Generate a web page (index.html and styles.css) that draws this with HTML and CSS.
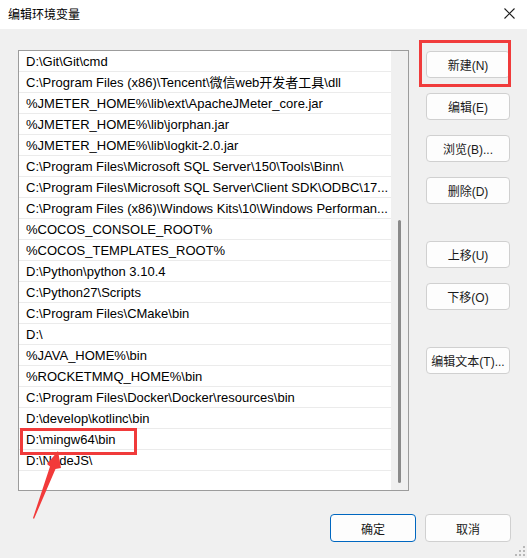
FILE: index.html
```html
<!DOCTYPE html>
<html lang="zh">
<head>
    <meta charset="UTF-8">
    <title>编辑环境变量</title>
    <link rel="stylesheet" href="styles.css">
</head>
<body>
    <div class="window">
        <div class="titlebar">
            <span class="title">编辑环境变量</span>
            <svg class="close" width="11" height="11" viewBox="0 0 11 11">
                <path d="M0.5 0.5L10.5 10.5M10.5 0.5L0.5 10.5" stroke="#1c1c1c" stroke-width="1.1"/>
            </svg>
        </div>

        <div class="content">
            <div class="main">
                <div class="listbox">
                    <ul class="paths">
                        <li>D:\Git\Git\cmd</li>
                        <li>C:\Program Files (x86)\Tencent\微信web开发者工具\dll</li>
                        <li>%JMETER_HOME%\lib\ext\ApacheJMeter_core.jar</li>
                        <li>%JMETER_HOME%\lib\jorphan.jar</li>
                        <li>%JMETER_HOME%\lib\logkit-2.0.jar</li>
                        <li>C:\Program Files\Microsoft SQL Server\150\Tools\Binn\</li>
                        <li>C:\Program Files\Microsoft SQL Server\Client SDK\ODBC\17...</li>
                        <li>C:\Program Files (x86)\Windows Kits\10\Windows Performan...</li>
                        <li>%COCOS_CONSOLE_ROOT%</li>
                        <li>%COCOS_TEMPLATES_ROOT%</li>
                        <li>D:\Python\python 3.10.4</li>
                        <li>C:\Python27\Scripts</li>
                        <li>C:\Program Files\CMake\bin</li>
                        <li>D:\</li>
                        <li>%JAVA_HOME%\bin</li>
                        <li>%ROCKETMMQ_HOME%\bin</li>
                        <li>C:\Program Files\Docker\Docker\resources\bin</li>
                        <li>D:\develop\kotlinc\bin</li>
                        <li>D:\mingw64\bin</li>
                        <li>D:\NodeJS\</li>
                    </ul>
                    <div class="scrollbar"><div class="thumb"></div></div>
                </div>

                <div class="actions">
                    <button class="btn">新建(N)</button>
                    <button class="btn">编辑(E)</button>
                    <button class="btn">浏览(B)...</button>
                    <button class="btn">删除(D)</button>
                    <button class="btn gap">上移(U)</button>
                    <button class="btn">下移(O)</button>
                    <button class="btn gap">编辑文本(T)...</button>
                </div>
            </div>

            <div class="footer">
                <button class="btn wide primary">确定</button>
                <button class="btn wide">取消</button>
            </div>
        </div>

        <!-- 标注 -->
        <div class="mark mark-new"></div>
        <div class="mark mark-row"></div>
        <svg class="arrow" width="40" height="80" viewBox="0 0 40 80">
            <polygon points="28,1 31,18 25.5,19 4,69 3,68 20,16.5 17,14" fill="#f23a3a"/>
        </svg>

        <svg class="grip" width="10" height="10" viewBox="0 0 10 10" fill="#b8b8b8">
            <rect x="8" y="0" width="2" height="2"/>
            <rect x="4" y="4" width="2" height="2"/>
            <rect x="8" y="4" width="2" height="2"/>
            <rect x="0" y="8" width="2" height="2"/>
            <rect x="4" y="8" width="2" height="2"/>
            <rect x="8" y="8" width="2" height="2"/>
        </svg>
    </div>
</body>
</html>
```

FILE: styles.css
```css
* {
    box-sizing: border-box;
}
body {
    margin: 0;
    font-family: "Liberation Sans", "Noto Sans CJK SC", sans-serif;
    font-size: 13px;
    color: #000;
}
.window {
    position: relative;
    width: 527px;
    height: 558px;
    display: flex;
    flex-direction: column;
    background: #f0f0f0;
    overflow: hidden;
}
.titlebar {
    height: 29px;
    background: #fff;
    display: flex;
    align-items: center;
    justify-content: space-between;
    padding: 0 12px 2px 8px;
}
.title {
    font-family: "Noto Sans CJK SC", sans-serif;
    font-size: 12px;
    color: #000;
}
.content {
    flex: 1;
    display: flex;
    flex-direction: column;
    padding: 21px 16px 0 18px;
}
.main {
    display: flex;
    gap: 17px;
}
.listbox {
    width: 391px;
    height: 441px;
    border: 1px solid #9c9c9c;
    background: #fff;
    display: flex;
}
.paths {
    flex: 1;
    list-style: none;
    margin: 0;
    padding: 0;
    min-width: 0;
}
.paths li {
    height: 21px;
    line-height: 20px;
    padding: 1px 2px 0 7px;
    border-bottom: 1px solid #ebebeb;
    white-space: nowrap;
    overflow: hidden;
}
.scrollbar {
    width: 17px;
    background: #f0f0f0;
    display: flex;
    justify-content: center;
    padding-top: 169px;
}
.thumb {
    width: 3px;
    height: 263px;
    border-radius: 2px;
    background: #8a8a8a;
}
.actions {
    display: flex;
    flex-direction: column;
    gap: 15px;
    padding-top: 1px;
}
.btn {
    width: 84px;
    height: 27px;
    padding: 0;
    background: #fdfdfd;
    border: 1px solid #d0d0d0;
    border-radius: 4px;
    font-family: "Liberation Sans", "Noto Sans CJK SC", sans-serif;
    font-size: 12px;
    color: #1a1a1a;
}
.btn.gap {
    margin-top: 22px;
}
.footer {
    display: flex;
    justify-content: flex-end;
    gap: 9px;
    margin-top: 23px;
}
.btn.wide {
    width: 86px;
    height: 28px;
}
.btn.primary {
    border-color: #0067c0;
}
.mark {
    position: absolute;
    border: 3px solid #f03b3b;
}
.mark-new {
    left: 419px;
    top: 40px;
    width: 92px;
    height: 47px;
}
.mark-row {
    left: 20px;
    top: 428px;
    width: 117px;
    height: 27px;
}
.arrow {
    position: absolute;
    left: 30px;
    top: 450px;
}
.grip {
    position: absolute;
    right: 2px;
    bottom: 2px;
}
```
